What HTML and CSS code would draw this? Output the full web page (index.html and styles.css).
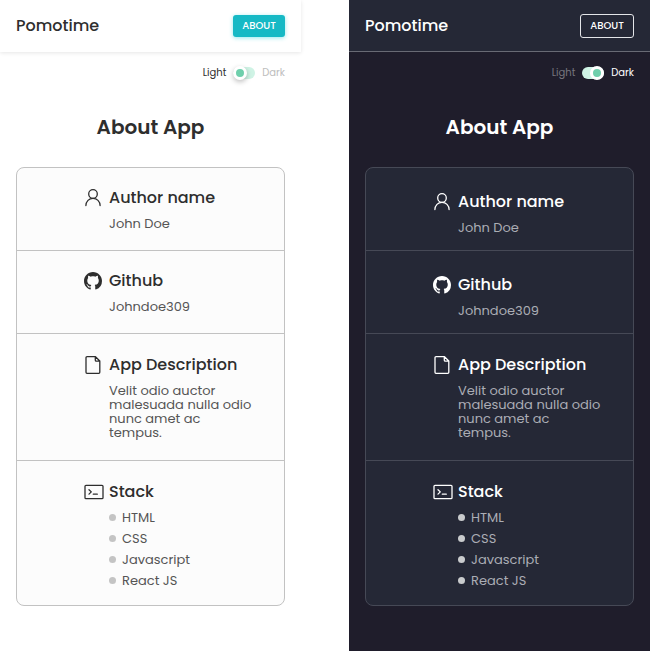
FILE: index.html
```
<!DOCTYPE html>
<html lang="en">
<head>
<meta charset="utf-8">
<meta name="viewport" content="width=device-width, initial-scale=1">
<title>Pomotime</title>
<link rel="stylesheet" href="styles.css">
</head>
<body>
<svg class="sprite" aria-hidden="true">
  <symbol id="user" viewBox="0 0 18 18"><g fill="none" stroke="currentColor" stroke-width="1.3" stroke-linecap="round"><circle cx="9" cy="5" r="4.300"/><path d="M1.900 16.600C2 12.300 5 9.300 9 9.300s7 3 7.100 7.300"/></g></symbol>
  <symbol id="github" viewBox="0 0 16 16"><path fill="currentColor" d="M8 0C3.580 0 0 3.580 0 8c0 3.540 2.290 6.530 5.470 7.590.4.070.55-.17.55-.38 0-.19-.01-.82-.01-1.490-2.010.37-2.530-.49-2.690-.94-.09-.23-.48-.94-.82-1.130-.28-.15-.68-.52-.01-.53.63-.01 1.080.58 1.230.82.72 1.210 1.870.87 2.330.66.070-.52.28-.87.51-1.070-1.780-.2-3.640-.89-3.640-3.950 0-.87.31-1.590.82-2.150-.08-.2-.36-1.020.08-2.120 0 0 .67-.21 2.200.82.64-.18 1.320-.27 2-.27s1.360.09 2 .27c1.530-1.040 2.200-.82 2.200-.82.44 1.100.16 1.920.08 2.120.51.56.82 1.270.82 2.150 0 3.070-1.870 3.750-3.650 3.950.29.25.54.73.54 1.480 0 1.070-.01 1.930-.01 2.200 0 .21.15.46.55.38A8.010 8.010 0 0 0 16 8c0-4.420-3.580-8-8-8z"/></symbol>
  <symbol id="file" viewBox="0 0 18 20"><path fill="none" stroke="currentColor" stroke-width="1.3" stroke-linejoin="round" d="M3 1.700h8.500l4.300 4.300v11.300a1 1 0 0 1-1 1H3a1 1 0 0 1-1-1V2.700a1 1 0 0 1 1-1zM11.300 1.700v3.500a1 1 0 0 0 1 1h3.500"/></symbol>
  <symbol id="terminal" viewBox="0 0 20 16"><g fill="none" stroke="currentColor" stroke-width="1.300" stroke-linejoin="round" stroke-linecap="round"><rect x="1" y="1.300" width="18" height="13.400" rx="1"/><path d="M5 5.700l2.300 2.200L5 10.100M9.300 10.200h4"/></g></symbol>
</svg>
<div class="page">
  <section class="screen light">
    <header class="bar">
      <span class="brand">Pomotime</span>
      <button class="about" type="button">ABOUT</button>
    </header>
    <label class="switch">
      <span class="on">Light</span>
      <input type="checkbox" role="switch">
      <span class="off">Dark</span>
    </label>
    <h1>About App</h1>
    <div class="card">
      <section class="row short">
        <svg class="icon"><use href="#user"/></svg>
        <h2>Author name</h2>
        <p>John Doe</p>
      </section>
      <section class="row short">
        <svg class="icon"><use href="#github"/></svg>
        <h2>Github</h2>
        <p>Johndoe309</p>
      </section>
      <section class="row about-text">
        <svg class="icon tall"><use href="#file"/></svg>
        <h2>App Description</h2>
        <p>Velit odio auctor<br>malesuada nulla odio<br>nunc amet ac<br>tempus.</p>
      </section>
      <section class="row stack">
        <svg class="icon wide"><use href="#terminal"/></svg>
        <h2>Stack</h2>
        <ul><li>HTML</li><li>CSS</li><li>Javascript</li><li>React JS</li></ul>
      </section>
    </div>
  </section>
  <section class="screen dark">
    <header class="bar">
      <span class="brand">Pomotime</span>
      <button class="about" type="button">ABOUT</button>
    </header>
    <label class="switch">
      <span class="off">Light</span>
      <input type="checkbox" role="switch" checked>
      <span class="on">Dark</span>
    </label>
    <h1>About App</h1>
    <div class="card">
      <section class="row short">
        <svg class="icon"><use href="#user"/></svg>
        <h2>Author name</h2>
        <p>John Doe</p>
      </section>
      <section class="row short">
        <svg class="icon"><use href="#github"/></svg>
        <h2>Github</h2>
        <p>Johndoe309</p>
      </section>
      <section class="row about-text">
        <svg class="icon tall"><use href="#file"/></svg>
        <h2>App Description</h2>
        <p>Velit odio auctor<br>malesuada nulla odio<br>nunc amet ac<br>tempus.</p>
      </section>
      <section class="row stack">
        <svg class="icon wide"><use href="#terminal"/></svg>
        <h2>Stack</h2>
        <ul><li>HTML</li><li>CSS</li><li>Javascript</li><li>React JS</li></ul>
      </section>
    </div>
  </section>
</div>
</body>
</html>
```
FILE: styles.css
```
*, ::before { box-sizing: border-box; }
body {
  margin: 0;
  background: #fff;
  font-family: Poppins, Inter, "Liberation Sans", sans-serif;
}
.sprite { display: none; }
.page {
  display: grid;
  grid-template-columns: 1fr 1fr;
  gap: 48px;
  min-height: 100vh;
}
h1, h2, p, ul { margin: 0; padding: 0; }

.light {
  --bg: #fff;
  --bar: #fff;
  --card: #fcfcfc;
  --line: #c2c2c2;
  --title: #2e2e2e;
  --text: #555;
  --muted: #bdbdbd;
  --dot: #c4c4c4;
}
.dark {
  --bg: #1f1d2b;
  --bar: #252836;
  --card: #252836;
  --line: #464956;
  --title: #fff;
  --text: #abadb5;
  --muted: #77767e;
  --dot: #c9cbcd;
}
.screen {
  background: var(--bg);
  color: var(--title);
}
.bar {
  display: flex;
  align-items: center;
  justify-content: space-between;
  height: 52px;
  padding: 0 16px;
  background: var(--bar);
  border-bottom: 1px solid transparent;
}
.light .bar { box-shadow: 0 1px 4px rgba(0, 0, 0, .1); }
.dark .bar { border-bottom-color: #686a74; }
.brand { font-size: 16px; font-weight: 500; }
.about {
  height: 22px;
  width: 52px;
  padding: 0;
  border: 0;
  border-radius: 3px;
  background: #16b9c5;
  color: #fff;
  font: 500 10px/22px Poppins, Inter, "Liberation Sans", sans-serif;
  box-shadow: 0 1px 4px rgba(22, 205, 215, .45);
}
.dark .about {
  width: 54px;
  height: 24px;
  border: 1px solid #e4e5e8;
  background: none;
  box-shadow: none;
}
.switch {
  display: flex;
  align-items: center;
  justify-content: flex-end;
  gap: 7px;
  height: 42px;
  padding: 0 16px;
  font-size: 10px;
}
.off { color: var(--muted); }
.switch input {
  appearance: none;
  display: flex;
  align-items: center;
  width: 22px;
  height: 12px;
  margin: 0;
  border-radius: 6px;
  background: #cff3e5;
}
.switch input::before {
  content: "";
  width: 14px;
  height: 14px;
  flex: none;
  border: 3px solid #fff;
  border-radius: 50%;
  background: #6fcfac;
  box-shadow: 0 2px 5px rgba(0, 0, 0, .25);
}
.switch input:checked { justify-content: flex-end; }
.switch input:checked::before { box-shadow: none; }
h1 {
  padding: 17px 0 23px;
  font-size: 20px;
  line-height: 33px;
  font-weight: 600;
  text-align: center;
}
.card {
  margin: 0 16px 45px;
  background: var(--card);
  border: 1px solid var(--line);
  border-radius: 8px;
}
.row {
  display: grid;
  grid-template-columns: 18px 1fr;
  column-gap: 7px;
  padding: 19px 16px 18px 67px;
  border-bottom: 1px solid var(--line);
}
.row:last-child { border-bottom: 0; }
.light .short { padding-top: 18px; padding-bottom: 19px; }
.dark .short { padding-top: 22px; padding-bottom: 15px; }
.icon {
  width: 18px;
  height: 18px;
  align-self: center;
  overflow: visible;
}
.tall { height: 20px; }
.wide { width: 20px; height: 16px; }
h2 {
  font-size: 16px;
  line-height: 24px;
  font-weight: 500;
}
.row p, .row ul {
  grid-column: 2;
  color: var(--text);
  font-size: 13px;
}
.row p { padding-top: 7px; line-height: 14px; white-space: nowrap; }
.about-text { padding-bottom: 20px; }
.stack { padding-bottom: 14px; }
.row ul {
  padding-top: 3px;
  line-height: 21px;
  list-style: none;
}
li {
  display: flex;
  align-items: center;
  gap: 6px;
}
li::before {
  content: "";
  width: 7px;
  height: 7px;
  border-radius: 50%;
  background: var(--dot);
}
```
